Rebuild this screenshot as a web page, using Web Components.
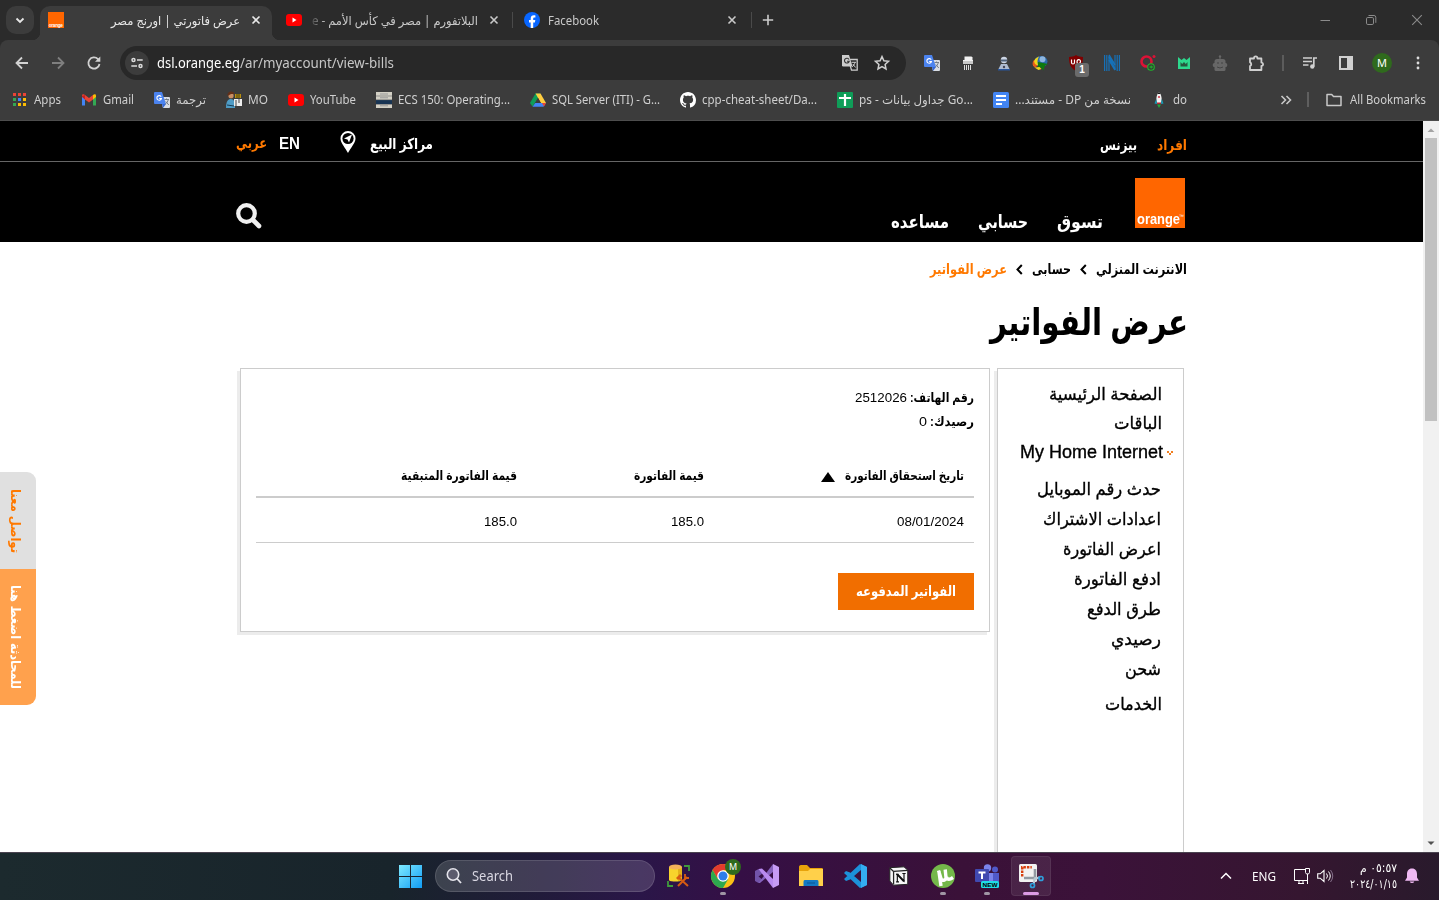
<!DOCTYPE html>
<html lang="ar">
<head>
<meta charset="utf-8">
<title>عرض فاتورتي | اورنج مصر</title>
<style>
html,body{margin:0;height:900px;overflow:hidden;background:#fff}
body{font-family:"Noto Sans","DejaVu Sans",sans-serif}
</style>
</head>
<body>
<desktop-screen></desktop-screen>
<script>
const define=(name,html,extra)=>customElements.define(name,class extends HTMLElement{
  connectedCallback(){
    if(this.shadowRoot)return;
    const t=document.createElement('template');
    t.innerHTML=typeof html==='function'?html(this):html;
    this.attachShadow({mode:'open'}).appendChild(t.content.cloneNode(true));
    if(extra)extra(this);
  }
});

/* One line of text, drawn at an exact advance width */
define('fit-text',el=>`<style>
:host{display:block;flex:none;width:${el.getAttribute('w')}px;white-space:nowrap;direction:ltr;text-align:left;transform:translateY(${el.getAttribute('dy')||0}px)}
span{display:inline-block;transform-origin:0 50%;direction:${el.hasAttribute('rtl')?'rtl':'ltr'};unicode-bidi:isolate}
</style><span><slot></slot></span>`,el=>{
  const s=el.shadowRoot.querySelector('span');
  const n=parseFloat(getComputedStyle(s).width);
  if(n)s.style.transform=`scaleX(${+el.getAttribute('w')/n})`;
});

const gt=`<path d="M6 5h9a1 1 0 0 1 1 1v9a1 1 0 0 1-1 1H9z" fill="#d9dde3"/><path d="M1 0h7l4 12H1a1 1 0 0 1-1-1V1a1 1 0 0 1 1-1z" fill="#4b83ef"/><path d="M9 16l3-4H8z" fill="#3367d6"/><path d="M7.2 4.8A2.3 2.3 0 1 0 7.4 6.5H5.2" fill="none" stroke="#fff" stroke-width="1.1"/><path d="M10.5 7.5h4.5M12.5 6.5v1M14.3 7.5c-.4 2-1.6 3.6-3 4.600M11.800 9.500l3 3.500" fill="none" stroke="#6b7480" stroke-width=".9"/>`;
const yt=`<rect y="2" width="16" height="12" rx="3" fill="#f00"/><path d="M6.500 5.500v5l4-2.500z" fill="#fff"/>`;
const I={
down:`<path d="M4.500 6.500L8 10l3.500-3.500" fill="none" stroke="#e8e8e8" stroke-width="1.800"/>`,
orange:`<rect width="16" height="16" fill="#ff6600"/><text x=".8" y="14.600" font-family="Liberation Sans" font-weight="bold" font-size="4.600" textLength="14" fill="#fff">orange</text>`,
x:`<path d="M4.500 4.500l7 7M11.500 4.500l-7 7" stroke="currentColor" stroke-width="1.600"/>`,
plus:`<path d="M8 2.800v10.400M2.800 8h10.400" stroke="#ccc" stroke-width="1.600"/>`,
yt,gt,
fb:`<circle cx="8" cy="8" r="8" fill="#0866ff"/><path d="M6.700 16v-5.500H5V8h1.700V6.800C6.700 4.300 7.800 3.200 10 3.200c.5 0 1.100.1 1.400.2v2.200h-.9c-1 0-1.300.4-1.300 1.300V8h2.100l-.4 2.500H9.200V16z" fill="#fff"/>`,
min:`<path d="M3.500 8.500h9.500" stroke="#8b8b8b"/>`,
max:`<rect x="3.500" y="5.500" width="7" height="7" rx="1.300" fill="none" stroke="#8b8b8b"/><path d="M5.500 3.500h5.500a1.800 1.800 0 0 1 1.800 1.800v5.500" fill="none" stroke="#8b8b8b"/>`,
close:`<path d="M3.200 3.200l9.600 9.600M12.800 3.200l-9.600 9.600" stroke="#8b8b8b" stroke-width="1.100"/>`,
back:`<path d="M14 8H3M8 2.500L2.500 8 8 13.500" fill="none" stroke="#d2d2d2" stroke-width="1.800"/>`,
fwd:`<path d="M2 8h11M8 2.500L13.500 8 8 13.500" fill="none" stroke="#7f7f7f" stroke-width="1.800"/>`,
reload:`<path d="M13.500 9A5.600 5.600 0 1 1 12 4.100L13.500 5.600" fill="none" stroke="#d2d2d2" stroke-width="1.800"/><path d="M14.300 1.500v5.200H9z" fill="#d2d2d2"/>`,
tune:`<g fill="none" stroke="#dcdcdc" stroke-width="1.700"><circle cx="4" cy="4.500" r="1.700"/><circle cx="12" cy="11.500" r="1.700"/><path d="M8 4.500h6.500M1.500 11.500H8"/></g>`,
tr2:`<path d="M6.500 4.500h8.700v10.700H9.500z" fill="none" stroke="#ccc" stroke-width="1.300"/><path d="M0 0h7l3.500 11.500H1.200A1.200 1.200 0 0 1 0 10.300z" fill="#ccc"/><path d="M7 4.500A2.400 2.400 0 1 0 7.200 6.300H5" fill="none" stroke="#333" stroke-width="1.100"/><path d="M9.500 7.300h4.500M13 7.300c-.5 2-1.500 3.500-2.800 4.500M10.800 9l2.800 3.500" fill="none" stroke="#ccc"/>`,
star:`<path d="M8 1.600l1.900 4.200 4.600.5-3.400 3.100.9 4.600-4-2.300-4 2.300.9-4.600L1.500 6.300l4.600-.5z" fill="none" stroke="#d0d0d0" stroke-width="1.500"/>`,
shred:`<path d="M4.500 1.500h7l1 1V5h-8z" fill="#f2f2f2"/><rect x="3" y="5" width="10" height="4" fill="#c9c9c9"/><path d="M3 5.500h10" stroke="#f2f2f2"/><path d="M4.500 10v5M6.500 10v5M8.500 10v5M10.500 10v5" stroke="#ddd" stroke-width="1"/>`,
robot2:`<circle cx="8" cy="5" r="3.200" fill="#cdd6e5"/><path d="M5 4.500h6v2H5z" fill="#51627a"/><path d="M2 15l3-6h6l3 6z" fill="#aebbd0"/><path d="M2 14h12v1.500H2z" fill="#28549b"/><circle cx="8" cy="12" r="1.200" fill="#445"/>`,
idm:`<ellipse cx="9" cy="6.500" rx="6.500" ry="5.500" fill="#2b6aa8"/><circle cx="10.500" cy="4.200" r="3" fill="#8db5df"/><path d="M1 11c0-5 2-8 6-9.500C5.500 4 5 7 6 10z" fill="#f1d51a"/><path d="M3 12.500C0 10.500 0 7.500 2 5c0 3 1 5 4 5.500z" fill="#e85c18"/><path d="M6 7l10 2-3 1.500-1.500 5-2.500-3L6 12z" fill="#0d7a0d"/><path d="M2.500 12.500l4 2.500 3-1-2-2z" fill="#f1d51a"/>`,
ub:`<path d="M8 0c2 1.500 4.500 1.800 7 2 0 6.500-1 10.500-7 14-6-3.500-7-7.500-7-14 2.500-.2 5-.5 7-2z" fill="#800000"/><path d="M3.500 4.500v3c0 2 3 2 3 0v-3M9 7c0-3 3.500-3 3.500-.5S9 9.500 9 7" fill="none" stroke="#fff" stroke-width="1.200"/>`,
n:`<g stroke="#1671b8" stroke-width="1.200"><path d="M.6 0v16M2.800 0v16M5 1v15M13.200 0v16M15.400 0v16M11 0v15"/><path d="M5 2l6 12M5 5l6 10M5 0l6 10" stroke-width="1.500"/></g>`,
q:`<circle cx="6.500" cy="6.500" r="5" fill="none" stroke="#dc1236" stroke-width="2.600"/><circle cx="14" cy="1.600" r="1.500" fill="#dc1236"/><circle cx="11" cy="12" r="3.300" fill="#343c34" stroke="#1eb72c" stroke-width="1.100"/><path d="M9.500 12h3.500M11.200 10.500v3" stroke="#1eb72c"/>`,
w:`<path d="M2 2l3.500 3L8 3l2.500 2L14 2v12H2z" fill="#2dd88d"/><path d="M4.500 7v4.500h7V7L9.800 9 8 7 6.200 9z" fill="#27573f"/>`,
bot:`<g fill="#676767"><circle cx="8" cy="1.500" r="1.200"/><path d="M7.500 2h1v3h-1z"/><rect x="2.500" y="4" width="11" height="7" rx="2.500"/><rect x=".8" y="8" width="14.400" height="4" rx="1.500"/><rect x="2.500" y="9" width="11" height="7" rx="1.500"/></g><path d="M5 8h2M9 8h2M5 12q3 2 6 0" stroke="#444" fill="none"/>`,
puzzle:`<path d="M2 3.500h4V3a1.700 1.700 0 0 1 3.400 0v.5h4v4h.4a1.700 1.700 0 0 1 0 3.300h-.4v4.200H2v-4a2 2 0 0 0 0-3.700z" fill="none" stroke="#d0d0d0" stroke-width="1.800" stroke-linejoin="round"/>`,
music:`<path d="M1 3h9M1 6.500h9M1 10h5.500" stroke="#d0d0d0" stroke-width="1.600"/><circle cx="10.300" cy="11.500" r="2.200" fill="#d0d0d0"/><path d="M11.800 11.500V3H15" stroke="#d0d0d0" stroke-width="1.700" fill="none"/>`,
panel:`<path d="M2 2h12v12H2z" fill="none" stroke="#d0d0d0" stroke-width="2"/><path d="M9 2h5v12H9z" fill="#d0d0d0"/>`,
dots:`<g fill="#ddd"><circle cx="8" cy="3" r="1.400"/><circle cx="8" cy="8" r="1.400"/><circle cx="8" cy="13" r="1.400"/></g>`,
apps:`<path d="M1 1h3v3H1zM6 1h3v3H6zM11 1h3v3h-3z" fill="#ea4335"/><path d="M1 6h3v3H1z" fill="#34a853"/><path d="M6 6h3v3H6z" fill="#4285f4"/><path d="M11 6h3v3h-3zM6 11h3v3H6zM11 11h3v3h-3z" fill="#fbbc04"/><path d="M1 11h3v3H1z" fill="#34a853"/>`,
gmail:`<path d="M1 4v9.500h3V7z" fill="#4285f4"/><path d="M15 4v9.500h-3V7z" fill="#34a853"/><path d="M1 3.500C1 2 3 2 4 3l4 3 4-3v4.500l-4 3-4-3z" fill="#ea4335"/><path d="M12 3c1-1 3-1 3 .5V5l-3 2.500z" fill="#fbbc04"/><path d="M1 4v1l3 2.500V3z" fill="#c5221f"/>`,
mo:`<circle cx="5" cy="3.700" r="2.600" fill="#c98e64"/><path d="M1.500 4C1 -1.500 8-1.500 8.500 2L5 2z" fill="#633019"/><path d="M0 16c0-7 2-9 5-9s4 3 4 9z" fill="#4e9bc5"/><path d="M1 13l7 1" stroke="#173c55"/><rect x="9" y="2" width="6" height="4" fill="#b98f10"/><path d="M10 3h4M10 5h4" stroke="#433a10"/><rect x="8" y="7" width="8" height="7" fill="#eee"/><path d="M10 8v6M13 7v4" stroke="#454545"/>`,
ecs:`<rect width="16" height="16" fill="#d3d0c5"/><path d="M0 8h16v4H0z" fill="#183453"/><path d="M4 2h8M4 5.800h8M4 13.800h8" stroke="#999"/><path d="M0 12.500h16M0 4h16M0 7.700h16" stroke="#777" stroke-width=".7"/>`,
drive:`<path d="M5.500 1.500h5L5 11l-2.500 3.500L0 11z" fill="#0f9d58"/><path d="M5.500 1.500h5L16 11h-5z" fill="#ffcd40"/><path d="M5.200 11H16l-2.500 3.700h-11z" fill="#4285f4"/><path d="M8 6l-2.800 5h5.600z" fill="#3c3c3c"/><path d="M12 11h4l-2 3.500z" fill="#ea4335"/>`,
gh:`<path fill="#fff" d="M8 0C3.580 0 0 3.580 0 8c0 3.540 2.290 6.530 5.470 7.590.4.070.55-.17.55-.38 0-.19-.01-.82-.01-1.490-2.010.37-2.530-.49-2.690-.94-.09-.23-.48-.94-.82-1.130-.28-.15-.68-.52-.01-.53.63-.01 1.080.58 1.230.82.72 1.210 1.870.87 2.330.66.07-.52.28-.87.51-1.070-1.780-.2-3.640-.89-3.640-3.950 0-.87.31-1.590.82-2.150-.08-.2-.36-1.020.08-2.120 0 0 .67-.21 2.200.82.64-.18 1.320-.27 2-.27s1.360.09 2 .27c1.530-1.040 2.200-.82 2.200-.82.44 1.100.16 1.920.08 2.120.51.56.82 1.270.82 2.150 0 3.070-1.870 3.750-3.650 3.950.29.25.54.73.54 1.480 0 1.070-.01 1.930-.01 2.200 0 .21.15.46.55.38A8.010 8.010 0 0 0 16 8c0-4.420-3.580-8-8-8z"/>`,
sheets:`<rect width="16" height="16" rx="1" fill="#0f9d58"/><path d="M2 6h12M8 2v12" stroke="#fff" stroke-width="2.200"/>`,
docs:`<rect width="16" height="16" rx="1.500" fill="#4285f4"/><path d="M3 4h10M3 8h10M3 12h6" stroke="#fff" stroke-width="1.800"/>`,
rocket:`<path d="M8 0c3 3 3 8 2 11H6C5 8 5 3 8 0z" fill="#f2f2f2"/><path d="M5.200 7L3.500 11.500l2.500.5zM10.800 7l1.700 4.500-2.500.5z" fill="#13a0ba"/><path d="M6.500 2h3L8 0z" fill="#111"/><circle cx="8" cy="5" r="1.100" fill="#d2394b"/><path d="M6 10.500h4v1.500H6z" fill="#b23"/><path d="M6 12.500h4l-2 3.500z" fill="#20a83a"/>`,
more:`<path d="M4.500 4L8.500 8l-4 4M9.500 4l4 4-4 4" fill="none" stroke="#c8c8c8" stroke-width="1.600"/>`,
folder:`<path d="M1 2.500h4.700L7.500 4.500H15v9H1z" fill="none" stroke="#c8c8c8" stroke-width="1.500" stroke-linejoin="round"/>`,
pin:`<path d="M8 0a7.500 7.500 0 0 0-7.500 7.500C.5 12 5.500 17 8 22c2.500-5 7.500-10 7.500-14.500A7.500 7.500 0 0 0 8 0z" fill="#fff"/><circle cx="8" cy="7.500" r="5.600" fill="#000"/><path d="M12 3.500L9 11.500 7.500 8.500 4 7.500z" fill="#fff"/>`,
search:`<circle cx="10.500" cy="10.500" r="8.300" fill="none" stroke="#f0f0f0" stroke-width="4.200"/><path d="M17 17l6 6" stroke="#f0f0f0" stroke-width="4.600" stroke-linecap="round"/>`,
crumb:`<path d="M5.800 1L1.500 5.500 5.800 10" fill="none" stroke="#000" stroke-width="2"/>`,
tri:`<path d="M7 0l7 10H0z" fill="#000"/>`,
mini:`<path d="M0 0h2v2H0zM4 0h2v2H4zM2 2h2v2H2z" fill="#f18022"/>`,
up:`<path d="M4.500 11L8 7.500l3.500 3.500z" fill="#a3a3a3"/>`,
dn:`<path d="M4.500 6.500L8 10l3.500-3.500z" fill="#505050"/>`,
win:`<defs><linearGradient id="a" x2="1" y2="1"><stop stop-color="#7eeaff"/><stop offset="1" stop-color="#119cf4"/></linearGradient></defs><path d="M0 0h11.500v11.500H0zM12.500 0H24v11.500H12.500zM0 12.500h11.500V24H0zM12.500 12.500H24V24H12.500z" fill="url(#a)"/>`,
tsearch:`<circle cx="7" cy="6.500" r="5.700" fill="#5b5b6d" stroke="#e5e5ec" stroke-width="1.600"/><path d="M11 10.500l4 4.500" stroke="#e5e5ec" stroke-width="1.800"/>`,
sql:`<path d="M2 3v13c0 2 13 2 13 0V3z" fill="#f8d42c"/><path d="M11 3h4v13c-1 1-2 1-4 1z" fill="#e3b21b"/><ellipse cx="8.500" cy="3" rx="6.500" ry="2.500" fill="#f3b259"/><path d="M17 2h5v5M1 17v5h5" fill="none" stroke="#3f9b3c" stroke-width="1.800"/><path d="M11 13l10 9M20 13l-9 9" stroke="#d65b12" stroke-width="2"/><path d="M9 14l4-4 2 2-4 4z" fill="#d65b12"/><path d="M18 10v4h4" stroke="#d65b12" stroke-width="1.800" fill="none"/>`,
chrome:`<circle cx="12" cy="12" r="12" fill="#fbc116"/><path d="M1.600 6A12 12 0 0 1 22.400 6H12l-5.200 9z" fill="#e33b2e"/><path d="M1.600 6a12 12 0 0 0 10.400 18l5.200-9H6.800z" fill="#2da94f"/><circle cx="12" cy="12" r="5.800" fill="#fff"/><circle cx="12" cy="12" r="4.500" fill="#2f7de9"/>`,
vs:`<path d="M0 7l3.500-2L8 9l-4.500 3.500L8 16l-4.500 3L0 17z" fill="#7253a9"/><path d="M3.500 19L18 0v8L5 19z" fill="#8662bd"/><path d="M3.500 5L7 4.500 18 15v9z" fill="#b98af0"/><path d="M18 0l6 3v18l-6 3z" fill="#c79bf5"/>`,
files:`<path d="M0 3c0-1 .5-2 2-2h6l3 3h12c1 0 1 1 1 2v5H0z" fill="#e8a30a"/><path d="M0 7h9l2-2h13v17H0z" fill="#ffd04a"/><path d="M4.500 22v-4c0-2 1-2 2-2h11c1 0 2 0 2 2v4z" fill="#1479c5"/><path d="M8 19h8" stroke="#0b5793"/>`,
code:`<path d="M17 0l7 3v18l-7 3L1 9l2-2 4 1.500L18 18V6L7 15.500 3 17l-2-2z" fill="#1c91da"/><path d="M18 0l6 3v18l-6 3z" fill="#34adf1"/>`,
notion:`<path d="M1 2l17-1 4.500 4V22l-17 1L1 18z" fill="#f6f6f6" stroke="#252525" stroke-width="1.200"/><path d="M5.500 6.500l17-1.200M5.500 6.500V22M1 2.500l4.500 4" fill="none" stroke="#252525" stroke-width="1.500"/><path d="M10 19v-9l8 8V9M8.500 10h3M16 9h4M8.500 19h3.500" fill="none" stroke="#111" stroke-width="1.400"/><path d="M10 10l8 8.500" stroke="#111" stroke-width="2.300"/>`,
ut:`<circle cx="12" cy="12" r="12" fill="#74b84a"/><path d="M7.500 6.500l2.500 8c1 3 5 2 5-1l-.8-8M15.500 13c1 3 3 3 6.500.5M8 8l2 14" fill="none" stroke="#fff" stroke-width="3.400"/>`,
teams:`<circle cx="20" cy="5.500" r="3" fill="#5059c9"/><path d="M15 9h9v8c0 4-6 5-9 2z" fill="#5059c9"/><circle cx="12.500" cy="4" r="3.700" fill="#7b83eb"/><path d="M6 9h12v9c-1 5-10 5-12 0z" fill="#7b83eb"/><rect y="5" width="14" height="13" rx="1" fill="#4049b0"/><path d="M3.500 8.500h7M7 8.500V15" stroke="#fff" stroke-width="2"/><rect x="6" y="17" width="18" height="7" rx="1.500" fill="#20dce7"/><text x="7.600" y="22.700" font-size="5.800" font-weight="bold" font-family="Liberation Sans" textLength="15" lengthAdjust="spacingAndGlyphs">NEW</text>`,
snip:`<rect width="18" height="18" rx="1.500" fill="#f2f2f2"/><path d="M3.200 12.500V3.200h9.600" fill="none" stroke="#d8400f" stroke-width="2.400" stroke-dasharray="2.500 1"/><path d="M5 14h11V5" fill="none" stroke="#929aa2" stroke-width="2.600"/><path d="M14 16l7-3M16.500 13l-2 7" stroke="#b9c8d2" stroke-width="2"/><circle cx="13.500" cy="21.500" r="2" fill="none" stroke="#2f9fdb" stroke-width="1.700"/><circle cx="22" cy="14.500" r="2" fill="none" stroke="#2f9fdb" stroke-width="1.700"/>`,
tup:`<path d="M3 10.500L8 5.500l5 5" fill="none" stroke="#fff" stroke-width="1.500"/>`,
net:`<path d="M11 1.500H.5v11h13V8M4 15.500h6M5 12.500v3M9 12.500v3M13.500 6v10" fill="none" stroke="#fff"/><path d="M11.500.5h4v4l-1 1.500h-2l-1-1.500z" fill="none" stroke="#fff"/>`,
vol:`<path d="M.7 5.800v4.400h2.500L7 13.500v-11L3.200 5.800z" fill="none" stroke="#fff" stroke-width="1.100"/><path d="M9.500 5.500q2 2.500 0 5M11.500 3.500q3.500 4.500 0 9" fill="none" stroke="#fff"/><path d="M13.500 2q4.500 6 0 12" fill="none" stroke="#85708a"/>`,
bell:`<path d="M8 .5C4.500.5 3 3 3 6v3.500L1 12.800h14L13 9.500V6C13 3 11.500.5 8 .5zM5.700 13.500a2.400 2.200 0 0 0 4.600 0z" fill="#f0b9f3"/>`
};
define('ui-icon',el=>{
  const w=el.getAttribute('w')||16,h=el.getAttribute('h')||w;
  return `<style>:host{display:block;flex:none;width:${w}px;height:${h}px}svg{display:block;overflow:visible}</style>
  <svg width="${w}" height="${h}" viewBox="${el.getAttribute('vb')||'0 0 16 16'}">${I[el.getAttribute('name')]}</svg>`;
});

define('browser-tab',`<style>
:host{display:flex;box-sizing:border-box;height:34px;align-items:center;font-size:12px;line-height:20px;color:#c9c9c9;position:relative}
:host([active]){background:#3c3c3c;border-radius:10px 10px 0 0;color:#e8e8e8}
:host([active])::before,:host([active])::after{content:"";position:absolute;bottom:0;width:8px;height:8px}
:host([active])::before{left:-8px;background:radial-gradient(circle at 0 0,transparent 8px,#3c3c3c 8.500px)}
:host([active])::after{right:-8px;background:radial-gradient(circle at 100% 0,transparent 8px,#3c3c3c 8.500px)}
.g{flex:1}.x{margin:-6px 0 0 8px}
</style><slot name="icon"></slot><slot name="start"></slot><div class="g"></div><slot></slot><ui-icon class="x" name="x"></ui-icon>`);

define('tab-strip',`<style>
:host{display:flex;height:40px;background:#2b2b2b;padding-top:6px;box-sizing:border-box}
.btn{width:28px;height:28px;margin:0 6px;border-radius:10px;background:#3c3c3c;display:grid;place-items:center;flex:none}
.t1{width:232px;padding:0 8px}.t2{width:240px;padding:0 10px 0 14px}.t3{width:238px;padding:0 11px 0 11px}
.t1 [slot],.t2 [slot],.t3 ui-icon{margin-top:-6px}
.sep{width:1px;height:16px;margin-top:6px;background:#4a4a4a;flex:none}
.new{margin:6px 0 0 8px}.g{flex:1}
.ctl{display:flex;gap:30px;margin:6px 14px 0 0}
.fade{-webkit-mask:linear-gradient(90deg,#0003,#000 14px)}
</style>
<div class="btn"><ui-icon name="down"></ui-icon></div>
<browser-tab active class="t1"><ui-icon slot="icon" name="orange"></ui-icon><fit-text rtl w="129" dy="-2">عرض فاتورتي | اورنج مصر</fit-text></browser-tab>
<browser-tab class="t2"><ui-icon slot="icon" name="yt"></ui-icon><fit-text rtl class="fade" w="166" dy="-2">البلاتفورم | مصر في كأس الأمم - e</fit-text></browser-tab>
<div class="sep"></div>
<browser-tab class="t3"><ui-icon slot="icon" name="fb"></ui-icon><fit-text slot="start" w="51" dy="-2" style="margin-left:8px">Facebook</fit-text></browser-tab>
<div class="sep"></div><ui-icon class="new" name="plus"></ui-icon><div class="g"></div>
<div class="ctl"><ui-icon name="min"></ui-icon><ui-icon name="max"></ui-icon><ui-icon name="close"></ui-icon></div>`);

define('tool-cell',el=>`<style>:host{display:grid;place-items:center;width:36px;height:36px;flex:none;position:relative}</style><ui-icon name="${el.getAttribute('icon')}"></ui-icon><slot></slot>`);
define('tool-bar',`<style>
:host{display:flex;height:46px;align-items:center;padding-left:4px;background:#3c3c3c;box-sizing:border-box;border-top-left-radius:8px;border-top-right-radius:8px}
.box{width:786px;height:34px;margin:0 8px;border-radius:17px;background:#282828;display:flex;align-items:center;box-sizing:border-box;padding:0 16px 0 5px;flex:none;font-size:14px;line-height:20px;color:#c7c7c7}
.tune{width:24px;height:24px;border-radius:50%;background:#3c3c3c;display:grid;place-items:center;margin-right:8px}
.host{color:#fff}.g{flex:1}
.badge{position:absolute;left:17px;top:18px;width:14px;height:14px;border-radius:3px;background:#6b6b6b;color:#fff;font:bold 10px/14px "Liberation Sans",sans-serif;text-align:center}
.sep{width:2px;height:16px;background:#5c5c5c;margin:0 8px}
.av{width:20px;height:20px;border-radius:50%;background:#2f6a1d;color:#fff;font-size:11px;line-height:20px;text-align:center;margin:0 8px}
</style>
<tool-cell icon="back"></tool-cell><tool-cell icon="fwd"></tool-cell><tool-cell icon="reload"></tool-cell>
<div class="box"><div class="tune"><ui-icon name="tune" w="14"></ui-icon></div><fit-text class="host" w="83">dsl.orange.eg</fit-text><fit-text w="154">/ar/myaccount/view-bills</fit-text><div class="g"></div><ui-icon name="tr2"></ui-icon><ui-icon name="star" style="margin-left:16px"></ui-icon></div>
<tool-cell icon="gt"></tool-cell><tool-cell icon="shred"></tool-cell><tool-cell icon="robot2"></tool-cell><tool-cell icon="idm"></tool-cell><tool-cell icon="ub"><div class="badge">1</div></tool-cell><tool-cell icon="n"></tool-cell><tool-cell icon="q"></tool-cell><tool-cell icon="w"></tool-cell><tool-cell icon="bot"></tool-cell><tool-cell icon="puzzle"></tool-cell>
<div class="sep"></div><tool-cell icon="music"></tool-cell><tool-cell icon="panel"></tool-cell><div class="av">M</div><tool-cell icon="dots"></tool-cell>`);

define('book-mark',el=>`<style>:host{display:flex;gap:6px;align-items:center;flex:none}</style><ui-icon name="${el.getAttribute('icon')}"></ui-icon><slot></slot>`);
define('bookmarks-bar',`<style>
:host{display:flex;gap:20px;height:35px;align-items:center;box-sizing:border-box;padding:0 13px 7px 12px;background:#3c3c3c;border-bottom:1px solid #4d4d4d;font-size:12px;line-height:20px;color:#cfcfcf}
.g{flex:1}.r{display:flex;align-items:center}.sep{width:2px;height:15px;background:#5f5f5f;margin:0 17px 0 14px}
</style>
<book-mark icon="apps"><fit-text w="27">Apps</fit-text></book-mark>
<book-mark icon="gmail"><fit-text w="31">Gmail</fit-text></book-mark>
<book-mark icon="gt"><fit-text rtl w="30">ترجمة</fit-text></book-mark>
<book-mark icon="mo"><fit-text w="20">MO</fit-text></book-mark>
<book-mark icon="yt"><fit-text w="46">YouTube</fit-text></book-mark>
<book-mark icon="ecs"><fit-text w="112">ECS 150: Operating...</fit-text></book-mark>
<book-mark icon="drive"><fit-text w="108">SQL Server (ITI) - G...</fit-text></book-mark>
<book-mark icon="gh"><fit-text w="115">cpp-cheat-sheet/Da...</fit-text></book-mark>
<book-mark icon="sheets"><fit-text w="114">ps - جداول بيانات Go...</fit-text></book-mark>
<book-mark icon="docs"><fit-text rtl w="116">نسخة من DP - مستند...</fit-text></book-mark>
<book-mark icon="rocket"><fit-text w="14">do</fit-text></book-mark>
<div class="g"></div>
<div class="r"><ui-icon name="more"></ui-icon><div class="sep"></div><ui-icon name="folder"></ui-icon><fit-text w="76" style="margin-left:8px">All Bookmarks</fit-text></div>`);

define('site-header',`<style>
:host{display:block;background:#000;color:#fff;font-weight:bold;height:121px;font-family:"Liberation Sans","DejaVu Sans",sans-serif}
.top,.nav{display:flex;box-sizing:border-box;padding:0 236px}
.top{height:41px;border-bottom:1px solid #666;font-size:15px;line-height:20px;padding-top:13px}
.nav{height:80px;padding-right:238px;font-size:18.500px;line-height:24px}
.o{color:#ff7900}.g{flex:1}
.logo{width:50px;height:50px;background:#f60;margin-top:16px;display:flex;align-items:flex-end;font-size:14px;line-height:17px;box-sizing:border-box;padding-left:2px}
.logo sup{font-size:5px;line-height:5px;margin:0 0 9px -1px;font-weight:normal}
.nav>fit-text{margin-top:48px}
</style>
<div class="top"><fit-text rtl class="o" w="31" dy="-1">عربي</fit-text><fit-text w="21" style="margin-left:12px;font-size:16px">EN</fit-text><ui-icon name="pin" h="22" vb="0 0 16 22" style="margin:-3px 14px 0 40px;width:16px"></ui-icon><fit-text rtl w="63">مراكز البيع</fit-text><div class="g"></div><fit-text rtl w="37" dy="1">بيزنس</fit-text><fit-text rtl class="o" w="30" dy="1" style="margin-left:20px">افراد</fit-text></div>
<div class="nav"><ui-icon name="search" w="25" vb="0 0 25 25" style="margin-top:41px"></ui-icon><div class="g"></div>
<fit-text rtl w="58">مساعده</fit-text><fit-text rtl w="50" style="margin-left:29px">حسابي</fit-text><fit-text rtl w="46" style="margin:48px 32px 0 29px">تسوق</fit-text>
<div class="logo"><fit-text w="43">orange</fit-text><sup>™</sup></div></div>`);

define('side-menu',`<style>
:host{display:block;width:187px;height:600px;box-sizing:border-box;border:1px solid #ccc;box-shadow:-3px 3px 0 #ececec;padding:11px 21px 0 0;font-size:17.500px;font-family:"Liberation Sans","DejaVu Sans",sans-serif;-webkit-text-stroke:.35px #000}
div{display:flex;justify-content:flex-end;line-height:29px;height:29px}
.s{line-height:30px;height:30px;padding-right:1px}
.h{margin-right:-11px;align-items:center}
</style>
<div><fit-text rtl w="113">الصفحة الرئيسية</fit-text></div>
<div><fit-text rtl w="48">الباقات</fit-text></div>
<div class="h"><fit-text w="143">My Home Internet</fit-text><ui-icon name="mini" w="6" h="4" vb="0 0 6 4" style="margin-left:4px"></ui-icon></div>
<div class="s" style="margin-top:7px"><fit-text rtl w="124">حدث رقم الموبايل</fit-text></div>
<div class="s"><fit-text rtl w="118">اعدادات الاشتراك</fit-text></div>
<div class="s"><fit-text rtl w="98">اعرض الفاتورة</fit-text></div>
<div class="s"><fit-text rtl w="87">ادفع الفاتورة</fit-text></div>
<div class="s"><fit-text rtl w="74">طرق الدفع</fit-text></div>
<div class="s"><fit-text rtl w="50">رصيدي</fit-text></div>
<div class="s"><fit-text rtl w="36">شحن</fit-text></div>
<div style="margin-top:6px"><fit-text rtl w="57">الخدمات</fit-text></div>`);

define('bills-panel',`<style>
:host{display:block;width:750px;height:264px;box-sizing:border-box;border:1px solid #ccc;box-shadow:-3px 3px 0 #ececec;padding:17px 15px 0;font-size:13px;line-height:24px;font-family:"Liberation Sans","DejaVu Sans",sans-serif}
.l{display:flex;justify-content:flex-end;gap:3px;height:24px}
b,.th{font-weight:bold}
.row{display:grid;grid-template-columns:261px 187px 260px;justify-items:end;padding-right:10px}
.th{margin-top:30px;height:32px;border-bottom:2px solid #ccc}
.td{height:44px;border-bottom:1px solid #ccc;line-height:47px}
.c{display:flex;align-items:center;gap:10px;height:24px}
.btn{width:136px;height:37px;margin:30px 0 0 auto;background:#f16e00;color:#fff;font-weight:bold;font-size:14px;line-height:36px;display:flex;justify-content:center}
</style>
<div class="l"><fit-text w="52">2512026</fit-text><b><fit-text rtl w="64">رقم الهاتف:</fit-text></b></div>
<div class="l"><fit-text w="8">0</fit-text><b><fit-text rtl w="44">رصيدك:</fit-text></b></div>
<div class="row th"><fit-text rtl w="116">قيمة الفاتورة المتبقية</fit-text><fit-text rtl w="70">قيمة الفاتورة</fit-text><div class="c"><ui-icon name="tri" w="14" h="10" vb="0 0 14 10" style="margin-top:2px"></ui-icon><fit-text rtl w="119">تاريخ استحقاق الفاتورة</fit-text></div></div>
<div class="row td"><fit-text w="33">185.0</fit-text><fit-text w="33">185.0</fit-text><fit-text w="67">08/01/2024</fit-text></div>
<div class="btn"><fit-text rtl w="100">الفواتير المدفوعه</fit-text></div>`);

define('side-tabs',`<style>
:host{display:block;position:absolute;left:0;top:351px;width:36px;border-radius:0 9px 9px 0;overflow:hidden;font:bold 13px/20px "DejaVu Sans",sans-serif}
div{display:flex;align-items:center;justify-content:center}
p{margin:0;flex:none;transform:rotate(90deg) translateY(3px)}
.a{height:97px;background:#e0e0e0;color:#ff7900}.b{height:136px;background:#ffa14d;color:#fff}
</style><div class="a"><p><fit-text rtl w="64">تواصل معنا</fit-text></p></div><div class="b"><p><fit-text rtl w="104">للمحادثة اضغط هنا</fit-text></p></div>`);

define('scroll-bar',`<style>
:host{display:flex;flex-direction:column;width:16px;height:731px;background:#f1f1f1;align-items:center}
.t{width:12px;height:283px;background:#c1c1c1;margin:1px 0 auto}
</style><ui-icon name="up"></ui-icon><div class="t"></div><ui-icon name="dn" style="margin-bottom:1px"></ui-icon>`);

define('site-page',`<style>
:host{display:flex;height:731px;overflow:hidden;position:relative;background:#fff}
.p{width:1423px;font-family:"Liberation Sans","DejaVu Sans",sans-serif;color:#000}
.cr{display:flex;justify-content:flex-end;align-items:center;padding-right:236px;height:24px;margin-top:15px;font-weight:bold;font-size:14px;line-height:24px}
.h1{display:flex;justify-content:flex-end;padding-right:235px;margin-top:18px;height:52px;font-size:37px;line-height:50px;font-weight:bold}
.cols{display:flex;gap:7px;margin:17px 0 0 240px}
.o{color:#ff7900}
</style>
<div class="p"><site-header></site-header>
<div class="cr"><fit-text rtl class="o" w="77">عرض الفواتير</fit-text><ui-icon name="crumb" w="7" h="11" vb="0 0 7 11" style="margin:0 9px"></ui-icon><fit-text rtl w="39">حسابى</fit-text><ui-icon name="crumb" w="7" h="11" vb="0 0 7 11" style="margin:0 9px"></ui-icon><fit-text rtl w="91">الانترنت المنزلي</fit-text></div>
<div class="h1"><fit-text rtl w="198" dy="-1">عرض الفواتير</fit-text></div>
<div class="cols"><bills-panel></bills-panel><side-menu></side-menu></div></div>
<scroll-bar></scroll-bar><side-tabs></side-tabs>`);

define('task-app',el=>`<style>
:host{display:flex;flex:none;width:44px;height:48px;align-items:center;justify-content:center;position:relative}
:host([on])::before{content:"";position:absolute;inset:4px 2px;background:#ffffff14;border:1px solid #ffffff12;border-radius:4px;box-sizing:border-box}
:host([run])::after{content:"";position:absolute;bottom:5px;left:19px;width:6px;height:3px;border-radius:2px;background:#a096a4}
:host([on])::after{content:"";position:absolute;bottom:5px;left:14px;width:16px;height:3px;border-radius:2px;background:#dc9be4}
ui-icon{position:relative}
</style><ui-icon name="${el.getAttribute('icon')}" w="${el.getAttribute('s')||24}" vb="0 0 24 24"></ui-icon><slot></slot>`);
define('task-bar',`<style>
:host{display:flex;height:48px;align-items:center;box-sizing:border-box;box-shadow:inset 0 1px #4a4350;padding-left:388px;color:#fff;background:linear-gradient(90deg,#1c2a2e 0,#18242b 390px,#211b3a 540px,#2a1648 640px,#350f45 740px,#3a1138 960px,#3b1239 1100px,#351630 1300px,#291a2c 1439px)}
.s{width:220px;height:32px;margin:0 2px 0 3px;box-sizing:border-box;border-radius:16px;border:1px solid #ffffff20;background:#ffffff26;display:flex;align-items:center;gap:10px;padding-left:10px;font-size:14px;line-height:20px;color:#d9d7e2;flex:none}
.m{position:absolute;left:24px;top:7px;width:16px;height:16px;border-radius:50%;background:#2f6a1d;font-size:9px;line-height:16px;text-align:center}
.g{flex:1}.r{display:flex;align-items:center;font-size:12px;line-height:16px}
.t{display:flex;flex-direction:column;align-items:flex-end;margin:0 7px 0 17px;font-size:11.500px;line-height:16px;font-family:"DejaVu Sans",sans-serif}
</style>
<task-app icon="win" s="23"></task-app><div class="s"><ui-icon name="tsearch"></ui-icon><fit-text w="41">Search</fit-text></div>
<task-app icon="sql"></task-app><task-app icon="chrome" run><div class="m">M</div></task-app><task-app icon="vs"></task-app><task-app icon="files"></task-app><task-app icon="code"></task-app><task-app icon="notion" s="20"></task-app><task-app icon="ut" run></task-app><task-app icon="teams" run></task-app><task-app icon="snip" on></task-app>
<div class="g"></div>
<div class="r"><ui-icon name="tup"></ui-icon><fit-text w="24" dy="1" style="margin:0 18px">ENG</fit-text><ui-icon name="net"></ui-icon><ui-icon name="vol" style="margin-left:7px"></ui-icon>
<div class="t"><fit-text rtl w="37">٠٥:٥٧ م</fit-text><fit-text w="47">٢٠٢٤/٠١/١٥</fit-text></div><ui-icon name="bell" style="margin-right:19px"></ui-icon></div>`);

define('desktop-screen',`<style>:host{display:flex;flex-direction:column;width:1439px;height:900px;overflow:hidden;background:#2b2b2b}</style>
<tab-strip></tab-strip><tool-bar></tool-bar><bookmarks-bar></bookmarks-bar><site-page></site-page><task-bar></task-bar>`);
</script>
</body>
</html>
